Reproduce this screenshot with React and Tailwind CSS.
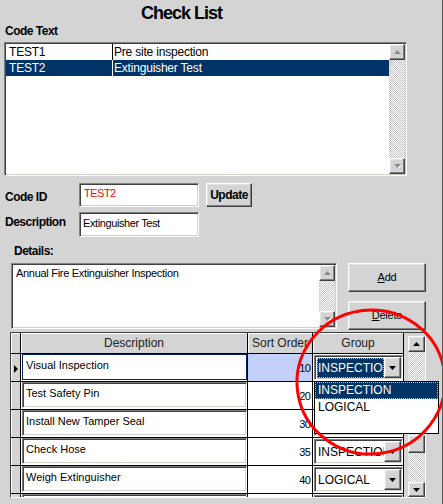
import React from 'react'

const sunken =
  'border border-t-[#808080] border-l-[#808080] border-r-white border-b-white shadow-[inset_1px_1px_0_#404040,inset_-1px_-1px_0_#d4d0c8]'
const raised =
  'border border-t-white border-l-white border-r-[#404040] border-b-[#404040] shadow-[inset_-1px_-1px_0_#808080,inset_1px_1px_0_#e4e4e4]'
const checker =
  'bg-[image:repeating-conic-gradient(#c4c4c4_0_25%,#ffffff_0_50%)] bg-[length:2px_2px]'
const label = 'text-[12px] leading-[14px] font-bold tracking-[-0.5px]'

function Tri({ up, gray }) {
  return (
    <svg width="7" height="4" viewBox="0 0 7 4">
      {gray && (
        <polygon
          points={up ? '4.5,1 8,5 1,5' : '1,1 8,1 4.5,5'}
          fill="#ffffff"
        />
      )}
      <polygon
        points={up ? '3.5,0 7,4 0,4' : '0,0 7,0 3.5,4'}
        fill={gray ? '#8a8a8a' : '#000000'}
      />
    </svg>
  )
}

function ScrollBtn({ up, gray, h = 'h-[16px]' }) {
  return (
    <div className={`${h} w-full flex items-center justify-center bg-[#d4d4d4] ${raised}`}>
      <Tri up={up} gray={gray} />
    </div>
  )
}

function VScroll({ gray }) {
  return (
    <div className="w-[16px] flex flex-col">
      <ScrollBtn up gray={gray} />
      <div className={`flex-1 ${checker}`} />
      <ScrollBtn gray={gray} />
    </div>
  )
}

const rows = [
  { d: 'Visual Inspection', n: '10', g: 'INSPECTION' },
  { d: 'Test Safety Pin', n: '20', g: 'INSPECTION' },
  { d: 'Install New Tamper Seal', n: '30', g: 'LOGICAL' },
  { d: 'Check Hose', n: '35', g: 'INSPECTION' },
  { d: 'Weigh Extinguisher', n: '40', g: 'LOGICAL' },
  { d: '', n: '', g: '' },
]

function Combo({ value, active }) {
  return (
    <div className={`ml-[1px] mt-[1px] w-[89px] h-[25px] bg-white p-px flex ${sunken}`}>
      <div className="flex-1 overflow-hidden flex">
        {active ? (
          <div className="ml-[1px] mt-[1px] flex-1 bg-[#003366] text-white border border-dotted border-[#e8b860] flex items-center overflow-hidden whitespace-nowrap text-[12px] leading-[14px]">
            {value}
          </div>
        ) : (
          <div className="pl-[2px] flex items-center overflow-hidden whitespace-nowrap text-[12px] leading-[14px]">
            {value}
          </div>
        )}
      </div>
      <div className={`w-[17px] flex items-center justify-center bg-[#d4d4d4] ${raised}`}>
        <Tri />
      </div>
    </div>
  )
}

export default function App() {
  return (
    <div className="relative w-[443px] h-[504px] overflow-hidden bg-[#d4d4d4] border-r border-[#5a5a5a] font-['Liberation_Sans',Arial,sans-serif] text-black">
      <h1 className="mt-[2px] ml-[141px] h-[22px] text-[18px] leading-[22px] font-bold tracking-[-1px]">
        Check List
      </h1>
      <div className={`ml-[5px] h-[14px] ${label}`}>Code Text</div>

      {/* Code list */}
      <div className={`mt-[4px] ml-[4px] w-[403px] h-[134px] bg-white p-px flex ${sunken}`}>
        <div className="flex-1 text-[12px] leading-[16px] tracking-[-0.2px]">
          <div className="flex h-[16px]">
            <div className="w-[107px] pl-[3px] border-r border-black">TEST1</div>
            <div className="flex-1 pl-[1px]">Pre site inspection</div>
          </div>
          <div className="flex h-[16px] bg-[#003366] text-white">
            <div className="w-[107px] pl-[3px] border-r border-white">TEST2</div>
            <div className="flex-1 pl-[1px]">Extinguisher Test</div>
          </div>
        </div>
        <VScroll gray />
      </div>

      {/* Code ID */}
      <div className="mt-[7px] ml-[5px] flex h-[24px]">
        <div className={`w-[74px] pt-[7px] ${label}`}>Code ID</div>
        <div className={`w-[120px] h-[24px] bg-white p-px ${sunken}`}>
          <div className="pl-[3px] pt-[2px] text-[11px] leading-[13px] text-[#ff0000] tracking-[-0.5px]">
            TEST2
          </div>
        </div>
        <button className={`ml-[7px] w-[46px] h-[24px] bg-[#d4d4d4] ${raised} ${label}`}>
          Update
        </button>
      </div>

      {/* Description */}
      <div className="mt-[5px] ml-[5px] flex h-[25px]">
        <div className={`w-[74px] pt-[3px] ${label}`}>Description</div>
        <div className={`w-[120px] h-[25px] bg-white p-px ${sunken}`}>
          <div className="pl-[2px] pt-[3px] text-[11px] leading-[13px] tracking-[-0.4px]">
            Extinguisher Test
          </div>
        </div>
      </div>

      <div className={`mt-[7px] ml-[14px] h-[14px] ${label}`}>Details:</div>

      {/* Details + buttons */}
      <div className="mt-[5px] ml-[11px] flex">
        <div className={`w-[326px] h-[66px] bg-white p-px flex ${sunken}`}>
          <div className="flex-1 pl-[3px] pt-[2px] text-[11px] leading-[13px] tracking-[-0.3px]">
            Annual Fire Extinguisher Inspection
          </div>
          <VScroll gray />
        </div>
        <div className="ml-[11px] flex flex-col">
          <button className={`w-[78px] h-[29px] bg-[#d4d4d4] ${raised} text-[11px] tracking-[-0.2px]`}>
            <span className="underline">A</span>dd
          </button>
          <button className={`mt-[9px] w-[78px] h-[29px] bg-[#d4d4d4] ${raised} text-[11px] tracking-[-0.2px]`}>
            <span className="underline">D</span>elete
          </button>
        </div>
      </div>

      {/* Items grid */}
      <div className="mt-[2px] ml-[10px] w-[416px] h-[166px] border border-t-[#404040] border-l-[#404040] border-r-white border-b-white flex overflow-hidden">
        <div className="w-[393px] flex flex-col">
          <div className="flex h-[21px] shrink-0 border-b border-black bg-[#d4d4d4] text-[12px] leading-[20px] text-[#202020]">
            <div className="w-[10px] border-r border-black shadow-[inset_1px_1px_0_#fff]" />
            <div className="w-[227px] border-r border-black shadow-[inset_1px_1px_0_#fff] text-center">
              Description
            </div>
            <div className="w-[65px] border-r border-black shadow-[inset_1px_1px_0_#fff] flex justify-center overflow-hidden whitespace-nowrap">
              Sort Order
            </div>
            <div className="w-[91px] border-r border-black shadow-[inset_1px_1px_0_#fff] text-center">
              Group
            </div>
          </div>
          {rows.map((r, i) => (
            <div key={i} className="flex h-[28px] shrink-0 border-b border-black">
              <div className="w-[10px] border-r border-black bg-[#d4d4d4] shadow-[inset_1px_0_0_#fff]">
                {i === 0 && (
                  <svg className="ml-[3px] mt-[11px]" width="4" height="8" viewBox="0 0 4 8">
                    <polygon points="0,0 4,4 0,8" fill="#000" />
                  </svg>
                )}
              </div>
              <div className="w-[227px] border-r border-black bg-white">
                <div
                  className={`ml-[1px] w-[225px] h-[26px] bg-white p-px ${
                    i === 0 ? 'border border-[#0a246a]' : sunken
                  }`}
                >
                  <div className="pl-[2px] pt-[3px] text-[11px] leading-[13px] whitespace-nowrap">
                    {r.d}
                  </div>
                </div>
              </div>
              <div
                className={`w-[65px] border-r border-black pr-[2px] pt-[8px] text-right text-[11px] leading-[13px] tracking-[-0.8px] ${
                  i === 0 ? 'bg-[#c2d0fa]' : 'bg-white'
                }`}
              >
                {r.n}
              </div>
              <div className="w-[91px] border-r border-black bg-white">
                <Combo value={r.g} active={i === 0} />
              </div>
            </div>
          ))}
        </div>
        <div className="w-[4px]" />
        <div className="w-[17px] pt-[3px] flex flex-col">
          <ScrollBtn up />
          <div className={`h-[83px] ${checker}`} />
          <div className={`h-[18px] bg-[#d4d4d4] ${raised}`} />
          <div className={`flex-1 ${checker}`} />
          <ScrollBtn h="h-[15px]" />
        </div>
      </div>

      {/* Open dropdown list */}
      <div className="absolute left-[314px] top-[381px] w-[125px] h-[53px] bg-white border border-black text-[12px] leading-[15px]">
        <div className="h-[17px] bg-[#003366] text-white border border-dotted border-[#e8b860] pl-[2px]">
          INSPECTION
        </div>
        <div className="h-[16px] pl-[3px] pt-[1px]">LOGICAL</div>
      </div>

      {/* Red annotation circle */}
      <svg className="absolute left-0 top-0 pointer-events-none" width="443" height="504" viewBox="0 0 443 504">
        <ellipse cx="371" cy="382" rx="74" ry="72" fill="none" stroke="#ff0000" strokeWidth="3" transform="rotate(-8 371 382)" />
      </svg>
    </div>
  )
}
